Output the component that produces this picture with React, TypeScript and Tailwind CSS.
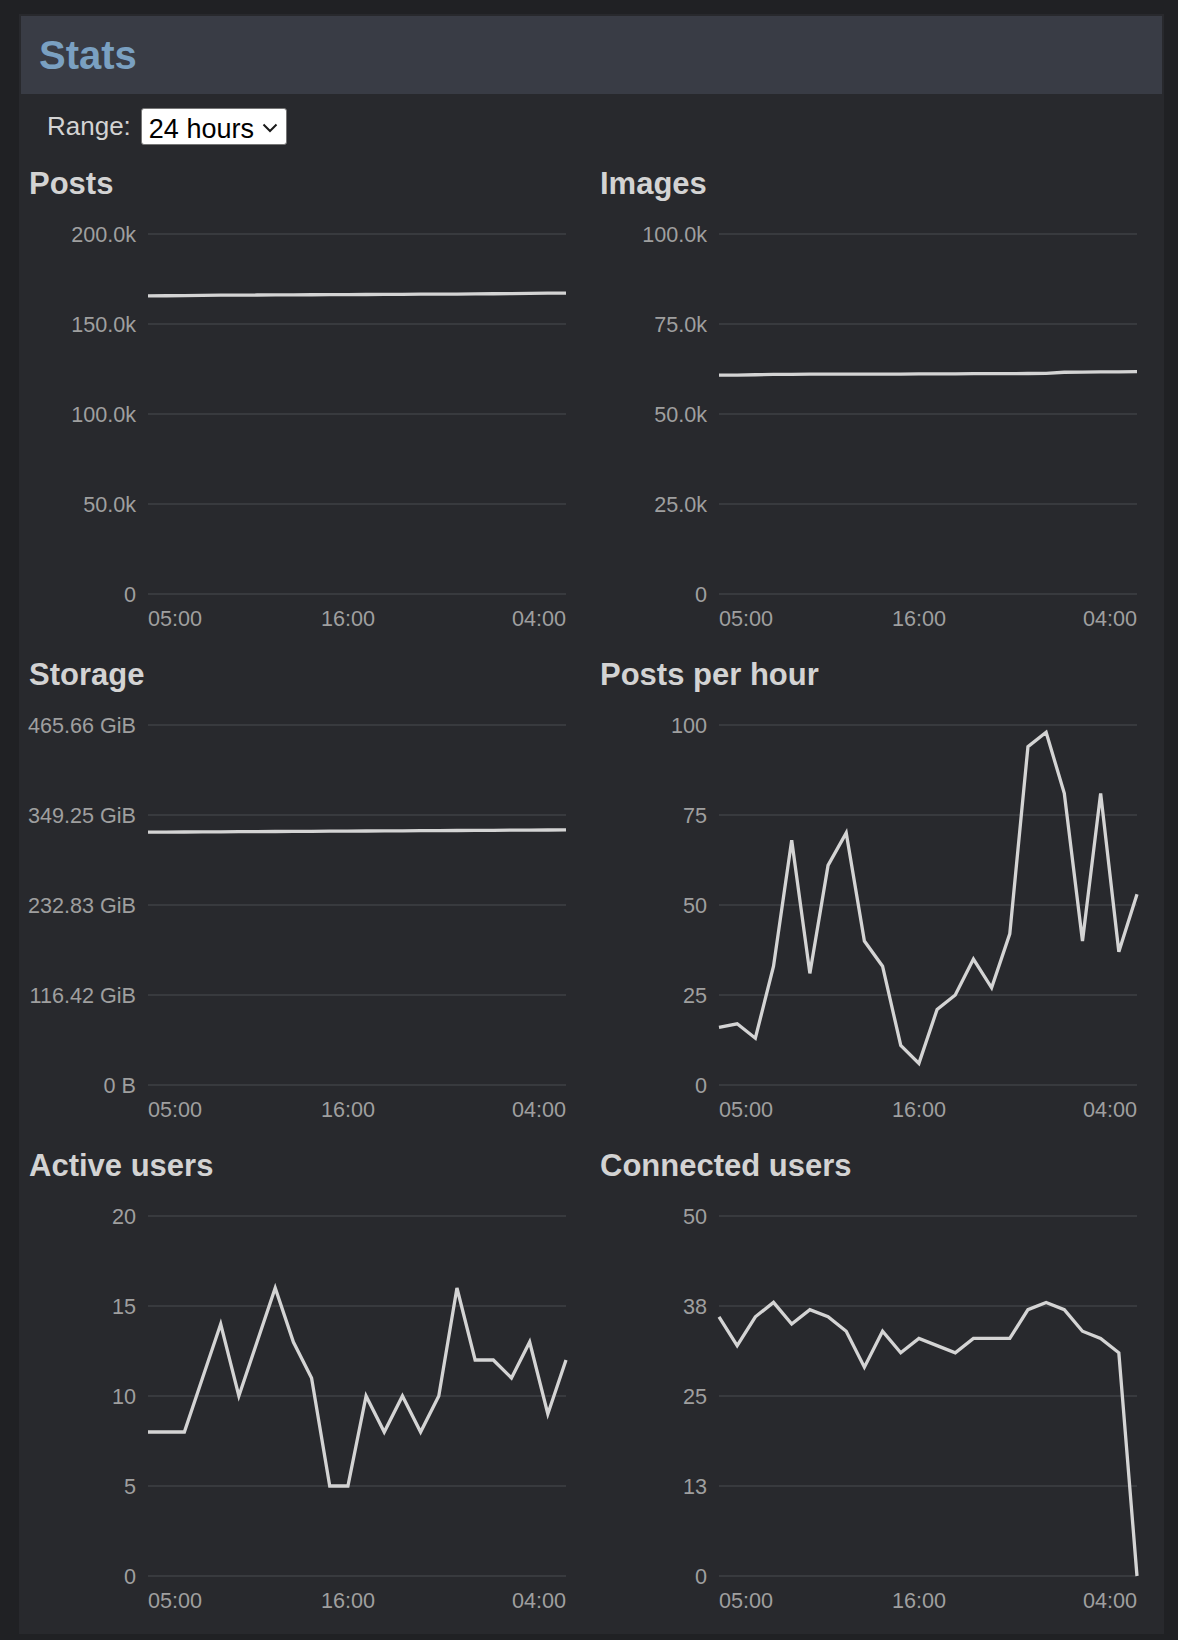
import React from "react";

type ChartProps = {
  title: string;
  ticks: string[];
  max: number;
  data: number[];
};

const PLOT_L = 120;
const PLOT_R = 538;
const TOP = 33;
const BOT = 393;

const postsData = [
  165.6, 165.7, 165.8, 165.9, 166.0, 166.05, 166.1, 166.15, 166.2, 166.25, 166.3, 166.35,
  166.4, 166.45, 166.5, 166.55, 166.6, 166.65, 166.7, 166.8, 166.9, 167.0, 167.1, 167.2,
];
const imagesData = [
  60.8, 60.8, 60.9, 61.0, 61.0, 61.05, 61.05, 61.1, 61.1, 61.1, 61.1, 61.15, 61.15, 61.15,
  61.2, 61.2, 61.2, 61.25, 61.3, 61.6, 61.65, 61.7, 61.7, 61.75,
];
const storageData = Array.from({ length: 24 }, (_, i) => 327 + (i * 3) / 23);
const postsPerHour = [
  16, 17, 13, 33, 68, 31, 61, 70, 40, 33, 11, 6, 21, 25, 35, 27, 42, 94, 98, 81, 40, 81, 37, 53,
];
const activeUsers = [8, 8, 8, 11, 14, 10, 13, 16, 13, 11, 5, 5, 10, 8, 10, 8, 10, 16, 12, 12, 11, 13, 9, 12];
const connectedUsers = [
  36, 32, 36, 38, 35, 37, 36, 34, 29, 34, 31, 33, 32, 31, 33, 33, 33, 37, 38, 37, 34, 33, 31, 0,
];

const charts: ChartProps[] = [
  { title: "Posts", ticks: ["200.0k", "150.0k", "100.0k", "50.0k", "0"], max: 200, data: postsData },
  { title: "Images", ticks: ["100.0k", "75.0k", "50.0k", "25.0k", "0"], max: 100, data: imagesData },
  {
    title: "Storage",
    ticks: ["465.66 GiB", "349.25 GiB", "232.83 GiB", "116.42 GiB", "0 B"],
    max: 465.66,
    data: storageData,
  },
  { title: "Posts per hour", ticks: ["100", "75", "50", "25", "0"], max: 100, data: postsPerHour },
  { title: "Active users", ticks: ["20", "15", "10", "5", "0"], max: 20, data: activeUsers },
  { title: "Connected users", ticks: ["50", "38", "25", "13", "0"], max: 50, data: connectedUsers },
];

function Chart({ title, ticks, max, data }: ChartProps) {
  const step = (PLOT_R - PLOT_L) / (data.length - 1);
  const points = data
    .map((v, i) => `${(PLOT_L + i * step).toFixed(2)},${(BOT - (v / max) * (BOT - TOP)).toFixed(2)}`)
    .join(" ");

  return (
    <div>
      <h2 className="pl-px text-[31px] leading-[34px] font-bold text-[#d3d3d3]">{title}</h2>
      <svg width={545} height={440} className="block">
        {ticks.map((t, i) => {
          const y = TOP + (i * (BOT - TOP)) / (ticks.length - 1);
          return (
            <g key={t}>
              <line x1={PLOT_L} x2={PLOT_R} y1={y} y2={y} stroke="#3e4045" strokeWidth={1.5} />
              <text x={108} y={y + 7.7} textAnchor="end" fontSize={21.6} fill="#9f9f9f">
                {t}
              </text>
            </g>
          );
        })}
        <polyline points={points} fill="none" stroke="#d4d4d4" strokeWidth={3.3} strokeLinejoin="miter" />
        <text x={PLOT_L} y={425} textAnchor="start" fontSize={21.6} fill="#9f9f9f">
          05:00
        </text>
        <text x={PLOT_L + 11 * step} y={425} textAnchor="middle" fontSize={21.6} fill="#9f9f9f">
          16:00
        </text>
        <text x={PLOT_R} y={425} textAnchor="end" fontSize={21.6} fill="#9f9f9f">
          04:00
        </text>
      </svg>
    </div>
  );
}

export default function App() {
  return (
    <div className="min-h-screen bg-[#202124] pt-[14px] pb-[6px] font-['Liberation_Sans',Arial,sans-serif]">
      <section className="ml-[19px] w-[1145px] bg-[#28292d] pt-[2px] pb-[11px]">
        <header className="mx-[2px] h-[78px] bg-[#393c45] flex items-center pl-[18px]">
          <h1 className="text-[40px] font-bold text-[#7aa0c1]">Stats</h1>
        </header>

        <div className="mt-[14px] pl-[28px] flex items-center gap-[10px] h-[37px]">
          <label htmlFor="range" className="text-[26px] text-[#d3d3d3]">
            Range:
          </label>
          <div className="relative">
            <select
              id="range"
              defaultValue="24h"
              className="appearance-none w-[146px] h-[37px] bg-white text-black text-[27px] border border-[#767676] rounded-[3px] pl-[7px] pr-[28px] outline-none"
            >
              <option value="24h">24 hours</option>
              <option value="7d">7 days</option>
              <option value="30d">30 days</option>
            </select>
            <svg
              width={16}
              height={10}
              viewBox="0 0 16 10"
              className="absolute right-[9px] top-[15px] pointer-events-none"
            >
              <path d="M1.5 1.5 L8 8 L14.5 1.5" fill="none" stroke="#1a1a1a" strokeWidth={2} />
            </svg>
          </div>
        </div>

        <div className="mt-[22px] pl-[9px] grid grid-cols-[545px_545px] gap-x-[26px] gap-y-[17px]">
          {charts.map((c) => (
            <Chart key={c.title} {...c} />
          ))}
        </div>
      </section>
    </div>
  );
}
